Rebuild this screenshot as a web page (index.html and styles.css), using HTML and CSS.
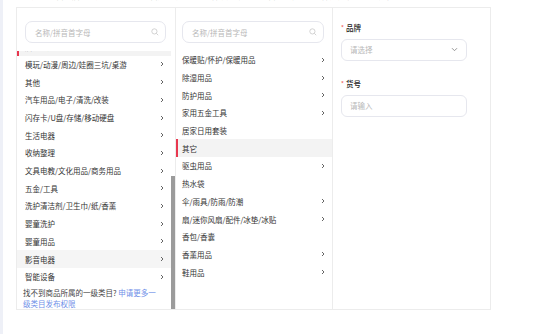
FILE: index.html
```html
<!DOCTYPE html>
<html lang="zh-CN">
<head>
    <meta charset="UTF-8">
    <meta name="viewport" content="width=device-width, initial-scale=1.0">
    <title>选择类目</title>
    <link rel="stylesheet" href="styles.css">
</head>
<body>
    <div class="page">
        <div class="topbar">
            <span>当前选择类目：居家日用 &gt; 其它</span>
            <span>类目选择说明</span>
            <span>商品发布规则与类目对应关系</span>
            <span>品牌资质</span>
            <span>帮助中心</span>
        </div>

        <div class="picker">
            <!-- 一级类目 -->
            <div class="col col-first">
                <div class="search">
                    <span class="placeholder">名称/拼音首字母</span>
                    <svg class="search-icon" width="8" height="8" viewBox="0 0 8 8"><circle cx="3.4" cy="3.4" r="2.6" fill="none" stroke="#c8c8c8" stroke-width="0.8"/><path d="M5.3 5.3L7.2 7.2" stroke="#c8c8c8" stroke-width="0.8"/></svg>
                </div>
                <div class="scroll-box">
                    <div class="list list-scroll" id="first-list">
                        <div class="item"><span>办公设备/耗材/相关服务</span><svg class="arrow" width="4" height="6" viewBox="0 0 4 6"><path d="M1 1l2 2-2 2" fill="none" stroke="#555" stroke-width="0.9"/></svg></div>
                        <div class="item"><span>餐饮具</span><svg class="arrow" width="4" height="6" viewBox="0 0 4 6"><path d="M1 1l2 2-2 2" fill="none" stroke="#555" stroke-width="0.9"/></svg></div>
                        <div class="item"><span>宠物/宠物食品及用品</span><svg class="arrow" width="4" height="6" viewBox="0 0 4 6"><path d="M1 1l2 2-2 2" fill="none" stroke="#555" stroke-width="0.9"/></svg></div>
                        <div class="item"><span>厨房/烹饪用具</span><svg class="arrow" width="4" height="6" viewBox="0 0 4 6"><path d="M1 1l2 2-2 2" fill="none" stroke="#555" stroke-width="0.9"/></svg></div>
                        <div class="item"><span>床上用品</span><svg class="arrow" width="4" height="6" viewBox="0 0 4 6"><path d="M1 1l2 2-2 2" fill="none" stroke="#555" stroke-width="0.9"/></svg></div>
                        <div class="item"><span>电脑硬件/显示器/电脑周边</span><svg class="arrow" width="4" height="6" viewBox="0 0 4 6"><path d="M1 1l2 2-2 2" fill="none" stroke="#555" stroke-width="0.9"/></svg></div>
                        <div class="item"><span>电子元器件市场</span><svg class="arrow" width="4" height="6" viewBox="0 0 4 6"><path d="M1 1l2 2-2 2" fill="none" stroke="#555" stroke-width="0.9"/></svg></div>
                        <div class="item"><span>服饰配件/皮带/帽子/围巾</span><svg class="arrow" width="4" height="6" viewBox="0 0 4 6"><path d="M1 1l2 2-2 2" fill="none" stroke="#555" stroke-width="0.9"/></svg></div>
                        <div class="item"><span>个人护理/保健/按摩器材</span><svg class="arrow" width="4" height="6" viewBox="0 0 4 6"><path d="M1 1l2 2-2 2" fill="none" stroke="#555" stroke-width="0.9"/></svg></div>
                        <div class="item"><span>户外/登山/野营/旅行用品</span><svg class="arrow" width="4" height="6" viewBox="0 0 4 6"><path d="M1 1l2 2-2 2" fill="none" stroke="#555" stroke-width="0.9"/></svg></div>
                        <div class="item"><span>家居饰品</span><svg class="arrow" width="4" height="6" viewBox="0 0 4 6"><path d="M1 1l2 2-2 2" fill="none" stroke="#555" stroke-width="0.9"/></svg></div>
                        <div class="item"><span>家庭/个人清洁工具</span><svg class="arrow" width="4" height="6" viewBox="0 0 4 6"><path d="M1 1l2 2-2 2" fill="none" stroke="#555" stroke-width="0.9"/></svg></div>
                        <div class="item"><span>节庆用品/礼品</span><svg class="arrow" width="4" height="6" viewBox="0 0 4 6"><path d="M1 1l2 2-2 2" fill="none" stroke="#555" stroke-width="0.9"/></svg></div>
                        <div class="item is-active"><span>居家日用</span><svg class="arrow" width="4" height="6" viewBox="0 0 4 6"><path d="M1 1l2 2-2 2" fill="none" stroke="#555" stroke-width="0.9"/></svg></div>
                        <div class="item"><span>模玩/动漫/周边/娃圈三坑/桌游</span><svg class="arrow" width="4" height="6" viewBox="0 0 4 6"><path d="M1 1l2 2-2 2" fill="none" stroke="#555" stroke-width="0.9"/></svg></div>
                        <div class="item"><span>其他</span><svg class="arrow" width="4" height="6" viewBox="0 0 4 6"><path d="M1 1l2 2-2 2" fill="none" stroke="#555" stroke-width="0.9"/></svg></div>
                        <div class="item"><span>汽车用品/电子/清洗/改装</span><svg class="arrow" width="4" height="6" viewBox="0 0 4 6"><path d="M1 1l2 2-2 2" fill="none" stroke="#555" stroke-width="0.9"/></svg></div>
                        <div class="item"><span>闪存卡/U盘/存储/移动硬盘</span><svg class="arrow" width="4" height="6" viewBox="0 0 4 6"><path d="M1 1l2 2-2 2" fill="none" stroke="#555" stroke-width="0.9"/></svg></div>
                        <div class="item"><span>生活电器</span><svg class="arrow" width="4" height="6" viewBox="0 0 4 6"><path d="M1 1l2 2-2 2" fill="none" stroke="#555" stroke-width="0.9"/></svg></div>
                        <div class="item"><span>收纳整理</span><svg class="arrow" width="4" height="6" viewBox="0 0 4 6"><path d="M1 1l2 2-2 2" fill="none" stroke="#555" stroke-width="0.9"/></svg></div>
                        <div class="item"><span>文具电教/文化用品/商务用品</span><svg class="arrow" width="4" height="6" viewBox="0 0 4 6"><path d="M1 1l2 2-2 2" fill="none" stroke="#555" stroke-width="0.9"/></svg></div>
                        <div class="item"><span>五金/工具</span><svg class="arrow" width="4" height="6" viewBox="0 0 4 6"><path d="M1 1l2 2-2 2" fill="none" stroke="#555" stroke-width="0.9"/></svg></div>
                        <div class="item"><span>洗护清洁剂/卫生巾/纸/香薰</span><svg class="arrow" width="4" height="6" viewBox="0 0 4 6"><path d="M1 1l2 2-2 2" fill="none" stroke="#555" stroke-width="0.9"/></svg></div>
                        <div class="item"><span>婴童洗护</span><svg class="arrow" width="4" height="6" viewBox="0 0 4 6"><path d="M1 1l2 2-2 2" fill="none" stroke="#555" stroke-width="0.9"/></svg></div>
                        <div class="item"><span>婴童用品</span><svg class="arrow" width="4" height="6" viewBox="0 0 4 6"><path d="M1 1l2 2-2 2" fill="none" stroke="#555" stroke-width="0.9"/></svg></div>
                        <div class="item is-hover"><span>影音电器</span><svg class="arrow" width="4" height="6" viewBox="0 0 4 6"><path d="M1 1l2 2-2 2" fill="none" stroke="#555" stroke-width="0.9"/></svg></div>
                        <div class="item"><span>智能设备</span><svg class="arrow" width="4" height="6" viewBox="0 0 4 6"><path d="M1 1l2 2-2 2" fill="none" stroke="#555" stroke-width="0.9"/></svg></div>
                        <p class="tip">找不到商品所属的一级类目? <a href="#">申请更多一级类目发布权限</a></p>
                    </div>
                    <div class="scroll-track"><div class="scroll-thumb"></div></div>
                </div>
            </div>

            <!-- 二级类目 -->
            <div class="col col-second">
                <div class="search">
                    <span class="placeholder">名称/拼音首字母</span>
                    <svg class="search-icon" width="8" height="8" viewBox="0 0 8 8"><circle cx="3.4" cy="3.4" r="2.6" fill="none" stroke="#c8c8c8" stroke-width="0.8"/><path d="M5.3 5.3L7.2 7.2" stroke="#c8c8c8" stroke-width="0.8"/></svg>
                </div>
                <div class="list">
                    <div class="item"><span>保暖贴/怀护/保暖用品</span><svg class="arrow" width="4" height="6" viewBox="0 0 4 6"><path d="M1 1l2 2-2 2" fill="none" stroke="#555" stroke-width="0.9"/></svg></div>
                    <div class="item"><span>除湿用品</span><svg class="arrow" width="4" height="6" viewBox="0 0 4 6"><path d="M1 1l2 2-2 2" fill="none" stroke="#555" stroke-width="0.9"/></svg></div>
                    <div class="item"><span>防护用品</span><svg class="arrow" width="4" height="6" viewBox="0 0 4 6"><path d="M1 1l2 2-2 2" fill="none" stroke="#555" stroke-width="0.9"/></svg></div>
                    <div class="item"><span>家用五金工具</span><svg class="arrow" width="4" height="6" viewBox="0 0 4 6"><path d="M1 1l2 2-2 2" fill="none" stroke="#555" stroke-width="0.9"/></svg></div>
                    <div class="item"><span>居家日用套装</span></div>
                    <div class="item is-active"><span>其它</span></div>
                    <div class="item"><span>驱虫用品</span><svg class="arrow" width="4" height="6" viewBox="0 0 4 6"><path d="M1 1l2 2-2 2" fill="none" stroke="#555" stroke-width="0.9"/></svg></div>
                    <div class="item"><span>热水袋</span></div>
                    <div class="item"><span>伞/雨具/防雨/防潮</span><svg class="arrow" width="4" height="6" viewBox="0 0 4 6"><path d="M1 1l2 2-2 2" fill="none" stroke="#555" stroke-width="0.9"/></svg></div>
                    <div class="item"><span>扇/迷你风扇/配件/冰垫/冰贴</span><svg class="arrow" width="4" height="6" viewBox="0 0 4 6"><path d="M1 1l2 2-2 2" fill="none" stroke="#555" stroke-width="0.9"/></svg></div>
                    <div class="item"><span>香包/香囊</span></div>
                    <div class="item"><span>香薰用品</span><svg class="arrow" width="4" height="6" viewBox="0 0 4 6"><path d="M1 1l2 2-2 2" fill="none" stroke="#555" stroke-width="0.9"/></svg></div>
                    <div class="item"><span>鞋用品</span><svg class="arrow" width="4" height="6" viewBox="0 0 4 6"><path d="M1 1l2 2-2 2" fill="none" stroke="#555" stroke-width="0.9"/></svg></div>
                </div>
            </div>

            <!-- 属性 -->
            <div class="col col-form">
                <div class="field">
                    <label class="field-label"><span class="required">*</span>品牌</label>
                    <div class="control">
                        <span class="placeholder">请选择</span>
                        <svg width="7" height="5" viewBox="0 0 7 5"><path d="M1 1.2l2.5 2.5L6 1.2" fill="none" stroke="#8a8a8a" stroke-width="0.9"/></svg>
                    </div>
                </div>
                <div class="field">
                    <label class="field-label"><span class="required">*</span>货号</label>
                    <div class="control">
                        <span class="placeholder">请输入</span>
                    </div>
                </div>
            </div>
        </div>
    </div>

    <script>
        const firstList = document.getElementById('first-list');
        firstList.scrollTop = firstList.scrollHeight;
    </script>
</body>
</html>
```

FILE: styles.css
```css
:root {
    --text-color: #333333;
    --muted-color: #b8b8b8;
    --line-color: #ececec;
    --active-bg: #f3f3f3;
    --accent-red: #e8374f;
    --link-color: #6f8fe8;
}

body {
    margin: 0;
    min-height: 100vh;
    box-sizing: border-box;
    border-left: 3px solid #eef0f7;
    background: #ffffff;
    font-family: "Noto Sans CJK SC", "Noto Sans", sans-serif;
    font-size: 7.5px;
    color: var(--text-color);
}

.page {
    padding-left: 13px;
}

.topbar {
    height: 7px;
    overflow: hidden;
    display: flex;
    gap: 14px;
    white-space: nowrap;
}

.topbar span {
    margin-top: -9px;
    line-height: 10px;
    font-size: 8px;
    color: #8a8a8a;
}

.picker {
    display: flex;
    width: 475px;
    height: 303px;
    box-sizing: border-box;
    border: 1px solid var(--line-color);
}

.col {
    display: flex;
    flex-direction: column;
    min-height: 0;
}

.col-first {
    width: 158px;
    border-right: 1px solid var(--line-color);
}

.col-second {
    width: 156px;
    border-right: 1px solid var(--line-color);
}

.col-form {
    flex: 1;
    padding: 15px 0 0 8px;
}

.search {
    height: 22px;
    box-sizing: border-box;
    margin: 13px 9px 8px 8px;
    padding: 0 6px 0 9px;
    border: 1px solid #e6e7ee;
    border-radius: 7px;
    display: flex;
    align-items: center;
    justify-content: space-between;
}

.col-second .search {
    margin: 13px 8px 8px 6px;
}

.placeholder {
    color: var(--muted-color);
    font-size: 7.5px;
}

.list {
    flex: 1;
    min-height: 0;
}

.scroll-box {
    flex: 1;
    min-height: 0;
    display: flex;
}

.list-scroll {
    overflow: hidden;
}

.scroll-track {
    width: 4px;
    display: flex;
    flex-direction: column;
    justify-content: flex-end;
}

.scroll-thumb {
    height: 133px;
    background: #9b9b9b;
}

.item {
    height: 17.7px;
    display: flex;
    align-items: center;
    justify-content: space-between;
    padding: 0 7px 0 8px;
    white-space: nowrap;
}

.col-second .item {
    padding: 0 7px 0 6px;
}

.item.is-active {
    background: var(--active-bg);
    box-shadow: inset 2px 0 0 var(--accent-red);
}

.item.is-hover {
    background: #f5f5f5;
}

.arrow {
    flex-shrink: 0;
}

.tip {
    margin: 0;
    padding: 1px 12px 0 6px;
    line-height: 11px;
    color: #444444;
}

.tip a {
    color: var(--link-color);
    text-decoration: none;
}

.field + .field {
    margin-top: 18.5px;
}

.field-label {
    display: block;
    line-height: 10px;
    font-weight: 500;
    color: #222222;
}

.required {
    color: #f0625c;
    font-size: 6px;
    margin-right: 2px;
    vertical-align: 1px;
}

.control {
    width: 126px;
    height: 22px;
    box-sizing: border-box;
    margin-top: 5.5px;
    padding: 0 8px 0 8px;
    border: 1px solid #e6e7ee;
    border-radius: 6px;
    display: flex;
    align-items: center;
    justify-content: space-between;
}
```
